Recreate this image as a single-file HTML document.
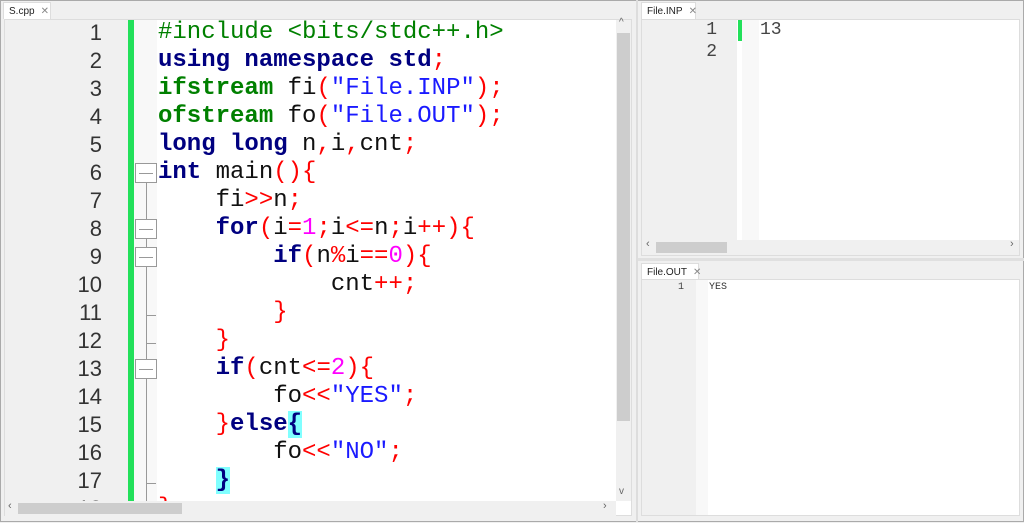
<!DOCTYPE html>
<html><head><style>
*{margin:0;padding:0;box-sizing:border-box}
body{width:1024px;height:522px;background:#f0f0f0;position:relative;overflow:hidden;font-family:"Liberation Sans",sans-serif}
.abs{position:absolute}
.tab{position:absolute;background:#fff;font-size:10px;color:#222;padding:3px 0 0 5px;height:17px;border:1px solid #ddd;border-bottom:none}
.tab span{color:#888;margin-left:6px}
.code{position:absolute;font-family:"Liberation Mono",monospace;white-space:pre}
.k{color:#000080;font-weight:bold}.g{color:#008000;font-weight:bold}.p{color:#008000}.o{color:#f00}.s{color:#1a1aff}.n{color:#f0f}
.hl{background:#80ffff}
.fb{position:absolute;left:135px;width:22px;height:20px;border:1px solid #999;background:#fff}
.fb::after{content:"";position:absolute;left:3px;right:3px;top:9px;height:1px;background:#999}
.tk{position:absolute;left:146px;width:10px;height:1px;background:#999}
</style></head><body>
<div class="abs" style="left:0;top:0;width:1024px;height:522px;border:1px solid #aaa"></div>
<!-- left panel -->
<div class="tab" style="left:3px;top:2px;width:48px">S.cpp<span>✕</span></div>
<div class="abs" style="left:4px;top:19px;width:628px;height:497px;background:#fff;border:1px solid #ddd"></div>
<div class="abs" style="left:5px;top:20px;width:123px;height:481px;background:#f0f0f0"></div>
<div class="abs" style="left:128px;top:20px;width:6px;height:481px;background:#22e05a"></div>
<div class="abs" style="left:134px;top:20px;width:23px;height:481px;background:#f8f8f8"></div>
<div class="abs" style="left:146px;top:183px;width:1px;height:318px;background:#999"></div>
<div class="fb" style="top:163px"></div><div class="fb" style="top:219px"></div><div class="fb" style="top:247px"></div><div class="fb" style="top:359px"></div>
<div class="tk" style="top:315px"></div><div class="tk" style="top:343px"></div><div class="tk" style="top:483px"></div>
<div class="code" style="left:5px;top:19px;width:97px;text-align:right;font-size:22px;line-height:28px;color:#333;font-family:'Liberation Sans',sans-serif">1
2
3
4
5
6
7
8
9
10
11
12
13
14
15
16
17
18</div>
<div class="abs" style="left:5px;top:501px;width:611px;height:15px;background:#f0f0f0"></div>
<div class="code" style="left:158px;top:19px;font-size:24px;line-height:28px;color:#111;height:482px;overflow:hidden;width:458px"><span class="p">#include &lt;bits/stdc++.h&gt;</span>
<span class="k">using namespace std</span><span class="o">;</span>
<span class="g">ifstream</span> fi<span class="o">(</span><span class="s">"File.INP"</span><span class="o">);</span>
<span class="g">ofstream</span> fo<span class="o">(</span><span class="s">"File.OUT"</span><span class="o">);</span>
<span class="k">long long</span> n<span class="o">,</span>i<span class="o">,</span>cnt<span class="o">;</span>
<span class="k">int</span> main<span class="o">(){</span>
    fi<span class="o">&gt;&gt;</span>n<span class="o">;</span>
    <span class="k">for</span><span class="o">(</span>i<span class="o">=</span><span class="n">1</span><span class="o">;</span>i<span class="o">&lt;=</span>n<span class="o">;</span>i<span class="o">++){</span>
        <span class="k">if</span><span class="o">(</span>n<span class="o">%</span>i<span class="o">==</span><span class="n">0</span><span class="o">){</span>
            cnt<span class="o">++;</span>
        <span class="o">}</span>
    <span class="o">}</span>
    <span class="k">if</span><span class="o">(</span>cnt<span class="o">&lt;=</span><span class="n">2</span><span class="o">){</span>
        fo<span class="o">&lt;&lt;</span><span class="s">"YES"</span><span class="o">;</span>
    <span class="o">}</span><span class="k">else<span class="hl">{</span></span>
        fo<span class="o">&lt;&lt;</span><span class="s">"NO"</span><span class="o">;</span>
    <span class="k hl">}</span>
<span class="o">}</span></div>
<div class="abs" style="left:616px;top:20px;width:15px;height:481px;background:#f0f0f0"></div>
<div class="abs" style="left:617px;top:33px;width:13px;height:388px;background:#cdcdcd"></div>
<div class="abs" style="left:619px;top:17px;font-size:10px;color:#666">^</div>
<div class="abs" style="left:619px;top:486px;font-size:10px;color:#666">v</div>
<div class="abs" style="left:18px;top:503px;width:164px;height:11px;background:#cdcdcd"></div>
<div class="abs" style="left:8px;top:500px;font-size:11px;color:#666">‹</div>
<div class="abs" style="left:603px;top:500px;font-size:11px;color:#666">›</div>
<div class="abs" style="left:636px;top:0;width:2px;height:522px;background:#ddd"></div>
<!-- right top -->
<div class="tab" style="left:641px;top:2px;width:55px">File.INP<span>✕</span></div>
<div class="abs" style="left:641px;top:19px;width:379px;height:237px;background:#fff;border:1px solid #ddd"></div>
<div class="abs" style="left:642px;top:20px;width:95px;height:220px;background:#f0f0f0"></div>
<div class="abs" style="left:738px;top:20px;width:4px;height:21px;background:#22e05a"></div>
<div class="abs" style="left:742px;top:20px;width:17px;height:220px;background:#f8f8f8"></div>
<div class="code" style="left:642px;top:19px;width:75px;text-align:right;font-size:18px;line-height:22px;color:#444">1
2</div>
<div class="code" style="left:760px;top:19px;font-size:18px;line-height:22px;color:#444">13</div>
<div class="abs" style="left:642px;top:240px;width:377px;height:15px;background:#f0f0f0"></div>
<div class="abs" style="left:656px;top:242px;width:71px;height:11px;background:#cdcdcd"></div>
<div class="abs" style="left:646px;top:238px;font-size:11px;color:#666">‹</div>
<div class="abs" style="left:1010px;top:238px;font-size:11px;color:#666">›</div>
<div class="abs" style="left:638px;top:258px;width:386px;height:3px;background:#e0e0e0"></div>
<!-- right bottom -->
<div class="tab" style="left:641px;top:263px;width:58px">File.OUT<span>✕</span></div>
<div class="abs" style="left:641px;top:279px;width:379px;height:237px;background:#fff;border:1px solid #ddd"></div>
<div class="abs" style="left:642px;top:280px;width:54px;height:235px;background:#f0f0f0"></div>
<div class="abs" style="left:696px;top:280px;width:12px;height:235px;background:#f8f8f8"></div>
<div class="code" style="left:642px;top:281px;width:42px;text-align:right;font-size:10px;line-height:13px;color:#444">1</div>
<div class="code" style="left:709px;top:281px;font-size:10px;line-height:13px;color:#333">YES</div>
</body></html>
